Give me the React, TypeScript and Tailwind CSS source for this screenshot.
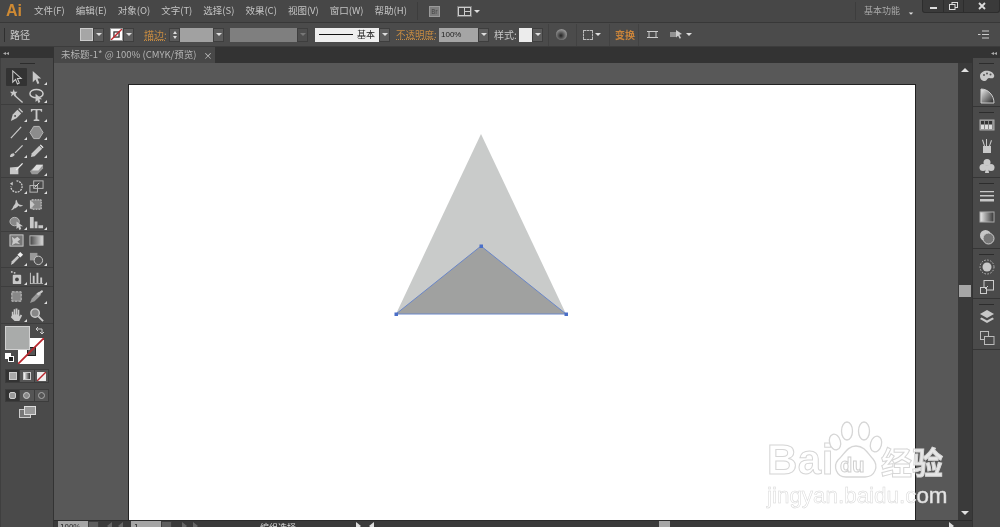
import React from "react";

const FONT = { fontFamily: '"Noto Sans CJK SC", "Liberation Sans", sans-serif' };

const Drop = ({ w = "w-[11px]", h = "h-[14px]", dim = false }: { w?: string; h?: string; dim?: boolean }) => (
  <div className={`${w} ${h} ${dim ? "bg-[#4e4e4e]" : "bg-[#5d5d5d]"} flex items-center justify-center border border-[#3e3e3e] shrink-0`}>
    <div className={`w-0 h-0 border-l-[3px] border-r-[3px] border-t-[3px] border-l-transparent border-r-transparent ${dim ? "border-t-[#777]" : "border-t-[#ddd]"}`} />
  </div>
);

const Caret = () => (
  <div className="w-0 h-0 border-l-[3px] border-r-[3px] border-t-[3px] border-l-transparent border-r-transparent border-t-[#ddd]" />
);

const Tool = ({ children, corner = false, active = false }: { children: React.ReactNode; corner?: boolean; active?: boolean }) => (
  <div className={`relative w-[21px] h-[18px] flex items-center justify-center ${active ? "bg-[#333] rounded-[1px]" : ""}`}>
    <svg width="15" height="15" viewBox="0 0 16 16" fill="#c8c8c8" stroke="none">{children}</svg>
    {corner && <div className="absolute right-0 bottom-[1px] w-0 h-0 border-l-[3px] border-l-transparent [border-bottom:3px_solid_#ddd]" />}
  </div>
);

const Row = ({ children }: { children: React.ReactNode }) => (
  <div className="flex justify-between pl-[5px] pr-[6px] h-[18px]">{children}</div>
);

const Group = ({ children, cls = "" }: { children: React.ReactNode; cls?: string }) => (
  <div className={`shadow-[0_1px_0_#3d3d3d] ${cls}`}>{children}</div>
);

const DockIcon = ({ children }: { children: React.ReactNode }) => (
  <div className="h-[20.5px] flex items-center justify-center">
    <svg width="16" height="16" viewBox="0 0 16 16" fill="#c8c8c8">{children}</svg>
  </div>
);

const DockGroup = ({ h, children }: { h: string; children: React.ReactNode }) => (
  <div className={`${h} border-b border-[#353535] flex flex-col`}>
    <div className="h-[7px] flex items-center justify-center shrink-0 pt-[3px]">
      <div className="w-[15px] h-[1px] bg-[#2c2c2c]" />
    </div>
    <div className="flex-1 flex flex-col justify-center">{children}</div>
  </div>
);

const menus = ["文件(F)", "编辑(E)", "对象(O)", "文字(T)", "选择(S)", "效果(C)", "视图(V)", "窗口(W)", "帮助(H)"];

export default function App() {
  return (
    <div style={FONT} className="w-[1000px] h-[527px] overflow-hidden flex flex-col bg-[#4a4a4a] text-[#c8c8c8] text-[10px] relative blur-[0.3px]">
      {/* Title bar */}
      <div className="h-[23px] shrink-0 bg-[#474747] border-b border-[#383838] flex items-start">
        <div className="w-[34px] shrink-0 h-full flex items-center pl-[6px] font-bold text-[16px] text-[#cf8a33] leading-none" style={{ fontFamily: '"Liberation Sans", sans-serif' }}>Ai</div>
        <div className="flex gap-[11px] h-full items-center">
          {menus.map((m) => (
            <span key={m} className="text-[9.5px] text-[#c4c4c4] whitespace-nowrap leading-none">{m}</span>
          ))}
        </div>
        <div className="ml-[10px] w-[1px] h-[18px] mt-[2px] bg-[#3d3d3d]" />
        <div className="ml-[11px] mt-[6px] w-[11px] h-[11px] bg-[#7d7d7d] border border-[#9a9a9a] text-[6px] leading-none flex items-center justify-center text-[#444]">Br</div>
        <div className="ml-[17px] mt-[6px] w-[15px] h-[11px] bg-[#ccc] border border-[#777] grid grid-cols-2 gap-[1px] p-[1px]">
          <div className="bg-[#444] row-span-2" />
          <div className="bg-[#444]" />
          <div className="bg-[#444]" />
        </div>
        <div className="ml-[2px] mt-[10px]"><Caret /></div>
        <div className="ml-auto w-[1px] h-[18px] mt-[2px] bg-[#3d3d3d]" />
        <span className="ml-[8px] mt-[4px] text-[9px] text-[#a8a8a8] leading-[13px] whitespace-nowrap">基本功能</span>
        <div className="ml-[8px] mt-[12px] scale-75"><Caret /></div>
        <div className="ml-[8px] w-[78px] h-[13px] bg-[#3a3a3a] rounded-b-[3px] border border-t-0 border-[#2d2d2d] flex items-stretch">
          <div className="w-[21px] border-r border-[#2d2d2d] flex items-center justify-center"><div className="w-[7px] h-[2px] bg-[#ddd] mt-[3px]" /></div>
          <div className="w-[20px] border-r border-[#2d2d2d] flex items-center justify-center">
            <svg width="9" height="8" viewBox="0 0 9 8" fill="none" stroke="#ddd"><rect x="3" y="0.5" width="5.5" height="5" /><rect x="0.5" y="2.5" width="5.5" height="5" fill="#3a3a3a" /></svg>
          </div>
          <div className="flex-1 flex items-center justify-center">
            <svg width="8" height="8" viewBox="0 0 8 8" stroke="#ddd" strokeWidth="1.8"><path d="M1 1L7 7M7 1L1 7" /></svg>
          </div>
        </div>
      </div>

      {/* Control bar */}
      <div className="h-[24px] shrink-0 bg-[#4b4b4b] border-b border-[#3c3c3c] flex items-center">
        <div className="ml-[4px] w-[1px] h-[14px] bg-[#2f2f2f]" />
        <span className="ml-[5px] w-[19px] text-[#c8c8c8] leading-none whitespace-nowrap">路径</span>
        <div className="ml-[51px] w-[13px] h-[13px] bg-[#a6a6a6] border border-[#ccc]" />
        <Drop />
        <div className="ml-[6px] w-[13px] h-[13px] bg-white border border-[#999] flex items-center justify-center overflow-hidden">
          <svg width="13" height="13" viewBox="0 0 13 13"><rect x="3.5" y="3.5" width="6" height="6" fill="none" stroke="#333" strokeWidth="1.5" /><path d="M0 13L13 0" stroke="#c3272d" strokeWidth="1.6" /></svg>
        </div>
        <Drop />
        <span className="ml-[10px] w-[20px] text-[#c48a42] underline decoration-dotted leading-none whitespace-nowrap">描边:</span>
        <div className="ml-[5px] w-[11px] h-[14px] bg-[#5a5a5a] border border-[#3e3e3e] flex flex-col items-center justify-center gap-[2px]">
          <div className="w-0 h-0 border-l-[2.5px] border-r-[2.5px] border-b-[3px] border-l-transparent border-r-transparent border-b-[#ddd]" />
          <div className="w-0 h-0 border-l-[2.5px] border-r-[2.5px] border-t-[3px] border-l-transparent border-r-transparent border-t-[#ddd]" />
        </div>
        <div className="w-[33px] h-[14px] bg-[#a1a1a1]" />
        <Drop />
        <div className="ml-[6px] w-[67px] h-[14px] bg-[#7f7f7f]" />
        <Drop dim />
        <div className="ml-[7px] w-[64px] h-[14px] bg-[#eeeeee] flex items-center pl-[4px] text-[#222]">
          <div className="w-[34px] h-[1px] border-t border-[#111]" />
          <span className="ml-[4px] text-[9px] leading-none whitespace-nowrap">基本</span>
        </div>
        <Drop />
        <span className="ml-[6px] w-[39px] text-[#c48a42] text-[9.5px] underline decoration-dotted leading-none whitespace-nowrap">不透明度:</span>
        <div className="ml-[4px] w-[39px] h-[14px] bg-[#a5a5a5] text-[#222] text-[8px] pl-[2px] leading-[13px]" style={{ fontFamily: '"Liberation Sans", sans-serif' }}>100%</div>
        <Drop />
        <span className="ml-[5px] w-[21px] leading-none whitespace-nowrap">样式:</span>
        <div className="ml-[4px] w-[13px] h-[14px] bg-[#ececec]" />
        <Drop />
        <div className="ml-[5px] w-[1px] h-[22px] bg-[#424242]" />
        <div className="ml-[7px] w-[11px] h-[11px] rounded-full bg-[radial-gradient(circle_at_45%_60%,#222_0%,#888_60%,#bbb_100%)]" />
        <div className="ml-[9px] w-[1px] h-[22px] bg-[#424242]" />
        <div className="ml-[6px] w-[10px] h-[10px] border border-dashed border-[#bbb]" />
        <div className="ml-[2px]"><Caret /></div>
        <div className="ml-[8px] w-[1px] h-[22px] bg-[#424242]" />
        <span className="ml-[5px] text-[#c9843b] font-bold leading-none whitespace-nowrap">变换</span>
        <div className="ml-[3px] w-[1px] h-[22px] bg-[#424242]" />
        <svg className="ml-[8px]" width="11" height="9" viewBox="0 0 11 9" fill="none" stroke="#ccc"><rect x="2" y="1.5" width="7" height="6" /><path d="M0 1.5h3M8 1.5h3M0 7.5h3M8 7.5h3" /></svg>
        <svg className="ml-[12px]" width="13" height="11" viewBox="0 0 13 11" fill="#ccc"><path d="M0 3h6v5H0z" opacity=".55" /><path d="M6 1l6 4-2.6.7L11 9l-1.3.7-1.6-3L6 8.4z" /></svg>
        <div className="ml-[3px]"><Caret /></div>
        <svg className="ml-auto mr-[11px]" width="11" height="9" viewBox="0 0 11 9" stroke="#ccc"><path d="M4 1h7M4 4.5h7M4 8h7" /><path d="M0 4.5h2.5" /></svg>
      </div>

      <div className="flex-1 flex min-h-0">
        {/* Left toolbox */}
        <div className="w-[54px] shrink-0 flex flex-col">
          <div className="h-[11px] bg-[#333] flex items-center pl-[3px] text-[6px] text-[#aaa] leading-none">◂◂</div>
          <div className="flex-1 bg-[#4a4a4a] border-r border-[#333] border-l border-l-[#3f3f3f] relative">
            <div className="h-[10px] flex items-center justify-center"><div className="w-[15px] h-[1px] bg-[#2c2c2c]" /></div>
            <Group>
              <Row>
                <Tool active><path d="M4 1v12l3-3 2 5 2-1-2-5h4z" fill="none" stroke="#ccc" strokeWidth="1.1" /></Tool>
                <Tool corner><path d="M4 1v12l3-3 2 5 2-1-2-5h4z" /></Tool>
              </Row>
              <Row>
                <Tool><path d="M6 7l9 8-1 1-9-8z" /><path d="M5 1l1 3 3 0-2 2 1 3-3-2-3 2 1-3-2-2 3 0z" /></Tool>
                <Tool corner><ellipse cx="8" cy="6" rx="7" ry="4.5" fill="none" stroke="#ccc" strokeWidth="1.6" /><path d="M7 6v9l2-2 1 3 2-1-1-3h3z" /></Tool>
              </Row>
            </Group>
            <Group cls="mt-[1px]">
              <Row>
                <Tool corner><path d="M2 15l2-7 5-5 4 4-5 5z" /><path d="M10 2l1-1 4 4-1 1z" /><circle cx="6.5" cy="9.5" r="1" fill="#444" /></Tool>
                <Tool corner><path d="M2 2h12v3h-1l-1-1.500h-3V13l2 .6V15H5v-1.400l2-.6V3.500H4L3 5H2z" /></Tool>
              </Row>
              <Row>
                <Tool corner><path d="M2 14L13 2" stroke="#ccc" strokeWidth="1.200" /></Tool>
                <Tool corner><path d="M5 1.500h6L15 8l-4 6.500H5L1 8z" fill="#8c8c8c" stroke="#bbb" /></Tool>
              </Row>
              <Row>
                <Tool corner><path d="M1 15c0-3 2-4 4-4l1 1c0 2-2 3-5 3z" /><path d="M6 10l8-8 1 1-8 8z" /></Tool>
                <Tool corner><path d="M2 15l1-4 8-8 3 3-8 8z" /><path d="M11.500 2.500l1-1 3 3-1 1z" fill="#eee" /></Tool>
              </Row>
              <Row>
                <Tool><path d="M1 7l9-1v8H1z" /><path d="M7 9l7-7 1 1-7 7z" fill="#eee" /></Tool>
                <Tool corner><path d="M1 11l7-7h7v4l-6 6H3z" fill="#999" /><path d="M8 4h7l-5 6H3z" fill="#ddd" /></Tool>
              </Row>
            </Group>
            <Group>
              <Row>
                <Tool corner><path d="M8 2a6 6 0 1 1-6 6" fill="none" stroke="#ccc" strokeWidth="1.400" strokeDasharray="2 1" /><path d="M1 5l3-2 0 4z" /></Tool>
                <Tool corner><rect x="1" y="7" width="8" height="7" fill="none" stroke="#bbb" /><rect x="5" y="2" width="10" height="8" fill="none" stroke="#bbb" /><path d="M6 9l5-5" stroke="#ddd" /></Tool>
              </Row>
              <Row>
                <Tool corner><path d="M2 14c2-1 2-4 4-6s0-4 2-5c1 2 1 4 3 5 1 .6 3 .5 4 1-2 1-4 2-5 0-1 2-3 3-4 3-1 1-2 2-4 2z" /></Tool>
                <Tool><rect x="3" y="3" width="10" height="10" fill="#888" stroke="#ddd" strokeDasharray="2 1" /><path d="M1 3l5 5-5 5z" /></Tool>
              </Row>
              <Row>
                <Tool corner><ellipse cx="6" cy="7" rx="5" ry="4.500" fill="#888" stroke="#bbb" /><path d="M8 7v8l2-2 1 3 2-1-1-3h3z" /></Tool>
                <Tool corner><path d="M1 2h4v12H1zM6 7h3v7H6zM10 11h5v3h-5z" /></Tool>
              </Row>
            </Group>
            <Group>
              <Row>
                <Tool><rect x="1" y="2" width="14" height="12" fill="#777" stroke="#ccc" /><path d="M3 4l3 2 3-2 3 3-3 2 3 3-5-1-4 2 1-4z" /></Tool>
                <Tool>
                  <defs><linearGradient id="g1"><stop stopColor="#444" /><stop offset="1" stopColor="#ddd" /></linearGradient></defs>
                  <rect x="1" y="3" width="14" height="10" fill="url(#g1)" stroke="#bbb" />
                </Tool>
              </Row>
              <Row>
                <Tool corner><path d="M2 15l1-4 6-6 2 2-6 6z" /><path d="M9 4l3-3 3 3-3 3z" fill="#eee" /></Tool>
                <Tool corner><rect x="1" y="2" width="8" height="8" fill="#999" /><circle cx="10" cy="10" r="4.500" fill="#555" stroke="#ccc" /></Tool>
              </Row>
            </Group>
            <Group cls="mt-[1px]">
              <Row>
                <Tool corner><rect x="4" y="5" width="9" height="10" rx="1" /><circle cx="8.500" cy="10" r="2" fill="#444" /><circle cx="3" cy="2" r="1" /><circle cx="6" cy="3" r="1" /></Tool>
                <Tool corner><path d="M1 15V3h1v11h13v1z" /><path d="M4 6h2v8H4zM8 3h2v11H8zM12 8h2v6h-2z" /></Tool>
              </Row>
            </Group>
            <Group cls="mt-[1px]">
              <Row>
                <Tool><rect x="3" y="3" width="10" height="10" fill="#888" stroke="#ccc" strokeDasharray="3 1" /></Tool>
                <Tool corner><path d="M1 15l2-5 7-7 3 3-7 7z" fill="#999" /><path d="M8 5l6-4 1 2-5 4z" /></Tool>
              </Row>
              <Row>
                <Tool corner><path d="M3 9V5h1.500v3h.5V2.500h1.500V8h.5V1.500H9V8h.5V3H11v7l1.500-2 1.500 1-3 6H6L2 11z" /></Tool>
                <Tool><circle cx="6.500" cy="6.500" r="4.500" fill="#888" stroke="#ccc" strokeWidth="1.500" /><path d="M10 10l5 5" stroke="#ccc" strokeWidth="2" /></Tool>
              </Row>
            </Group>
            {/* Colours */}
            <div className="relative h-[43px]">
              <div className="absolute left-[17px] top-[15px] w-[26px] h-[26px] bg-white overflow-hidden flex items-center justify-center">
                <div className="w-[9px] h-[9px] bg-[#555] border border-[#222]" />
                <svg className="absolute inset-0" width="26" height="26" viewBox="0 0 26 26"><path d="M0 26L26 0" stroke="#b9272d" strokeWidth="1.800" /></svg>
              </div>
              <div className="absolute left-[4px] top-[3px] w-[25px] h-[24px] bg-[#a9abaa] border border-[#d0d0d0]" />
              <svg className="absolute left-[34px] top-[3px]" width="10" height="9" viewBox="0 0 10 9" fill="none" stroke="#ccc"><path d="M1 3h6v5M1 3l2-2M1 3l2 2M7 8L5 6M7 8l2-2" /></svg>
              <div className="absolute left-[4px] top-[30px] w-[6px] h-[6px] bg-white" />
              <div className="absolute left-[7px] top-[33px] w-[6px] h-[6px] bg-[#222] border border-white" />
            </div>
            {/* Colour modes */}
            <div className="mt-[3px] mx-[4px] h-[14px] flex gap-[1px] bg-[#3c3c3c] p-[1px]">
              <div className="flex-1 bg-[#333] flex items-center justify-center"><div className="w-[8px] h-[8px] bg-[#a9a9a9] border border-[#ccc]" /></div>
              <div className="flex-1 bg-[#555] flex items-center justify-center"><div className="w-[8px] h-[8px] bg-gradient-to-r from-white to-[#333] border border-[#ccc]" /></div>
              <div className="flex-1 bg-[#555] flex items-center justify-center">
                <svg width="9" height="9" viewBox="0 0 9 9"><rect width="9" height="9" fill="#eee" /><path d="M0 9L9 0" stroke="#b9272d" strokeWidth="1.400" /></svg>
              </div>
            </div>
            <div className="mt-[6px] mx-[4px] h-[13px] flex gap-[1px] bg-[#3c3c3c] p-[1px]">
              <div className="flex-1 bg-[#333] flex items-center justify-center"><div className="w-[7px] h-[7px] rounded-[2px] bg-[#999] border border-[#ccc]" /></div>
              <div className="flex-1 bg-[#555] flex items-center justify-center"><div className="w-[7px] h-[7px] rounded-full bg-[#888] border border-[#ccc]" /></div>
              <div className="flex-1 bg-[#555] flex items-center justify-center"><div className="w-[7px] h-[7px] rounded-full border border-[#aaa]" /></div>
            </div>
            <div className="mt-[4px] flex justify-center">
              <svg width="17" height="12" viewBox="0 0 17 12"><rect x="0.500" y="3.500" width="11" height="8" fill="#777" stroke="#ccc" /><rect x="5.500" y="0.500" width="11" height="8" fill="#999" stroke="#ddd" /></svg>
            </div>
          </div>
        </div>

        {/* Document area */}
        <div className="w-[918px] shrink-0 flex flex-col">
          <div className="h-[16px] shrink-0 bg-[#333] flex">
            <div className="w-[161px] bg-[#484848] flex items-center pl-[7px] text-[9.5px] text-[#b4b4b4] leading-none whitespace-nowrap">
              未标题-1* @ 100% (CMYK/预览)
              <span className="ml-[7px] text-[9px] text-[#ccc]">×</span>
            </div>
          </div>
          <div className="flex-1 flex min-h-0">
            <div className="w-[904px] bg-[#585858] pl-[75px] pt-[22px] relative overflow-hidden">
              <div className="w-[786px] h-[435px] bg-white shadow-[0_0_0_1px_#222]">
                <svg width="786" height="435" viewBox="0 0 786 435" className="block">
                  <path d="M352 49L437 229H267z" fill="#c9cbca" />
                  <path d="M352 161L437 229H267z" fill="#a0a1a0" stroke="#6a86c8" strokeWidth="1" />
                  <rect x="350.500" y="159.500" width="3.500" height="3.500" fill="#4a6fc8" />
                  <rect x="265.500" y="227.500" width="3.500" height="3.500" fill="#4a6fc8" />
                  <rect x="435.500" y="227.500" width="3.500" height="3.500" fill="#4a6fc8" />
                </svg>
              </div>
              {/* Watermark */}
              <div className="absolute left-[713px] top-[357px] w-[180px] h-[87px] text-white/85" style={{ fontFamily: '"Liberation Sans", sans-serif' }}>
                <span className="absolute left-0 top-[15px] text-[42px] font-bold leading-[50px] tracking-[0.5px] [-webkit-text-stroke:1px_#d6d6d6]">Bai</span>
                <svg className="absolute left-[61px] top-0" width="56" height="60" viewBox="0 0 56 60" fill="rgba(255,255,255,.7)" stroke="#d6d6d6" strokeWidth="1.300">
                  <ellipse cx="7" cy="22" rx="5.500" ry="8" transform="rotate(-15 7 22)" />
                  <ellipse cx="19" cy="11" rx="5.500" ry="9" />
                  <ellipse cx="36" cy="11" rx="5.500" ry="9" />
                  <ellipse cx="48" cy="24" rx="5.500" ry="8" transform="rotate(15 48 24)" />
                  <path d="M28 26c9 0 12 8 17 13 6 7 2 18-8 18H18C8 57 5 46 10 40c6-5 9-14 18-14z" />
                </svg>
                <span className="absolute left-[73px] top-[33px] text-[20px] font-bold leading-[24px] text-white/80 [-webkit-text-stroke:1px_#d0d0d0]">du</span>
                <span className="absolute left-[114px] top-[22px] text-[31px] font-bold leading-[38px] whitespace-nowrap [-webkit-text-stroke:1px_#d6d6d6]" style={FONT}>经验</span>
                <span className="absolute left-0 top-[62px] text-[22.4px] leading-[28px] whitespace-nowrap [-webkit-text-stroke:0.5px_#d6d6d6]">jingyan.baidu.com</span>
              </div>
            </div>
            {/* Vertical scrollbar */}
            <div className="w-[14px] bg-[#3a3a3a] flex flex-col items-center">
              <div className="mt-[5px] w-0 h-0 border-l-[4px] border-r-[4px] border-b-[4px] border-l-transparent border-r-transparent border-b-[#e0e0e0]" />
              <div className="mt-[213px] w-[12px] h-[12px] bg-[#a6a6a6]" />
              <div className="mt-auto mb-[5px] w-0 h-0 border-l-[4px] border-r-[4px] border-t-[4px] border-l-transparent border-r-transparent border-t-[#e0e0e0]" />
            </div>
          </div>
          {/* Status bar */}
          <div className="h-[7px] shrink-0 bg-[#3a3a3a] overflow-hidden flex items-start border-t border-[#2b2b2b]">
            <div className="ml-[4px] w-[30px] h-[14px] bg-[#a5a5a5] text-[#222] text-[8px] pl-[2px] leading-[12px]">100%</div>
            <Drop />
            <div className="ml-[8px] mt-[1px] w-0 h-0 border-t-[4px] border-b-[4px] border-r-[5px] border-t-transparent border-b-transparent border-r-[#666]" />
            <div className="ml-[6px] mt-[1px] w-0 h-0 border-t-[4px] border-b-[4px] border-r-[5px] border-t-transparent border-b-transparent border-r-[#666]" />
            <div className="ml-[8px] w-[30px] h-[14px] bg-[#a5a5a5] text-[#222] text-[8px] pl-[3px] leading-[12px]">1</div>
            <Drop />
            <div className="ml-[10px] mt-[1px] w-0 h-0 border-t-[4px] border-b-[4px] border-l-[5px] border-t-transparent border-b-transparent border-l-[#666]" />
            <div className="ml-[6px] mt-[1px] w-0 h-0 border-t-[4px] border-b-[4px] border-l-[5px] border-t-transparent border-b-transparent border-l-[#666]" />
            <span className="ml-[62px] text-[9px] text-[#ddd] leading-[14px] whitespace-nowrap">编组选择</span>
            <div className="ml-[60px] mt-[1px] w-0 h-0 border-t-[4px] border-b-[4px] border-l-[5px] border-t-transparent border-b-transparent border-l-[#ddd]" />
            <div className="ml-[8px] mt-[1px] w-0 h-0 border-t-[4px] border-b-[4px] border-r-[5px] border-t-transparent border-b-transparent border-r-[#ddd]" />
            <div className="ml-[285px] w-[11px] h-[12px] bg-[#a6a6a6]" />
            <div className="ml-auto mr-[18px] mt-[1px] w-0 h-0 border-t-[4px] border-b-[4px] border-l-[5px] border-t-transparent border-b-transparent border-l-[#ddd]" />
          </div>
        </div>

        {/* Right dock */}
        <div className="w-[28px] shrink-0 flex flex-col">
          <div className="h-[11px] shrink-0 bg-[#333] flex items-center justify-end pr-[3px] text-[6px] text-[#aaa] leading-none">◂◂</div>
          <div className="flex-1 bg-[#4a4a4a] border-l border-[#333]">
            <DockGroup h="h-[49px]">
              <DockIcon><path d="M1 9c0-4 5-6 9-5 4 1 6 4 5 6-1 2-3 1-5 1-2 0-2 3-4 3-3 0-5-2-5-5z" /><circle cx="5" cy="8" r="1" fill="#555" /><circle cx="8" cy="6.500" r="1" fill="#555" /><circle cx="11.500" cy="7.500" r="1" fill="#555" /></DockIcon>
              <DockIcon>
                <defs><linearGradient id="g2" x1="0" y1="0" x2="1" y2="1"><stop stopColor="#eee" /><stop offset="1" stopColor="#222" /></linearGradient></defs>
                <path d="M2 1c7 0 13 6 13 14H2z" fill="url(#g2)" stroke="#ccc" />
              </DockIcon>
            </DockGroup>
            <DockGroup h="h-[71px]">
              <DockIcon><rect x="1" y="3" width="14" height="10" fill="#888" stroke="#aaa" /><path d="M2 4h3v3H2zM6 4h3v3H6zM10 4h3v3h-3z" fill="#333" /><path d="M2 8h3v4H2zM6 8h3v4H6zM10 8h3v4h-3z" fill="#ddd" /></DockIcon>
              <DockIcon><path d="M4 8h8v7H4z" /><path d="M7 8V1h1v7zM5 8L3 2l1-.5L6 8zM10 8l2-6 1 .5L11 8z" /></DockIcon>
              <DockIcon><circle cx="8" cy="4.500" r="3.500" /><circle cx="4" cy="9.500" r="3.500" /><circle cx="12" cy="9.500" r="3.500" /><path d="M7 8h2l1 7H6z" /></DockIcon>
            </DockGroup>
            <DockGroup h="h-[71px]">
              <DockIcon><path d="M1 3h14v1.200H1zM1 7h14v1.500H1zM1 11h14v2.500H1z" /></DockIcon>
              <DockIcon>
                <defs><linearGradient id="g3"><stop stopColor="#eee" /><stop offset="1" stopColor="#333" /></linearGradient></defs>
                <rect x="1" y="3" width="14" height="10" fill="url(#g3)" stroke="#aaa" />
              </DockIcon>
              <DockIcon><circle cx="6.500" cy="6.500" r="5.500" /><circle cx="9.500" cy="9.500" r="5.500" fill="#777" stroke="#ccc" /></DockIcon>
            </DockGroup>
            <DockGroup h="h-[50px]">
              <DockIcon><circle cx="8" cy="8" r="4.500" /><circle cx="8" cy="8" r="7" fill="none" stroke="#bbb" strokeDasharray="1.500 1.500" /></DockIcon>
              <DockIcon><rect x="5" y="1.500" width="9.500" height="9.500" fill="none" stroke="#ccc" /><rect x="1.500" y="8.500" width="6" height="6" fill="#4a4a4a" stroke="#ccc" /><path d="M6 10l3-3" stroke="#ccc" /></DockIcon>
            </DockGroup>
            <DockGroup h="h-[51px]">
              <DockIcon><path d="M8 1l7 4-7 4-7-4z" /><path d="M2.500 8.500L8 11.500l5.500-3L15 10l-7 4-7-4z" /></DockIcon>
              <DockIcon><rect x="1.500" y="1.500" width="8" height="8" fill="none" stroke="#bbb" /><rect x="5.500" y="6.500" width="9.500" height="8" fill="#4a4a4a" stroke="#bbb" /></DockIcon>
            </DockGroup>
          </div>
        </div>
      </div>
    </div>
  );
}
